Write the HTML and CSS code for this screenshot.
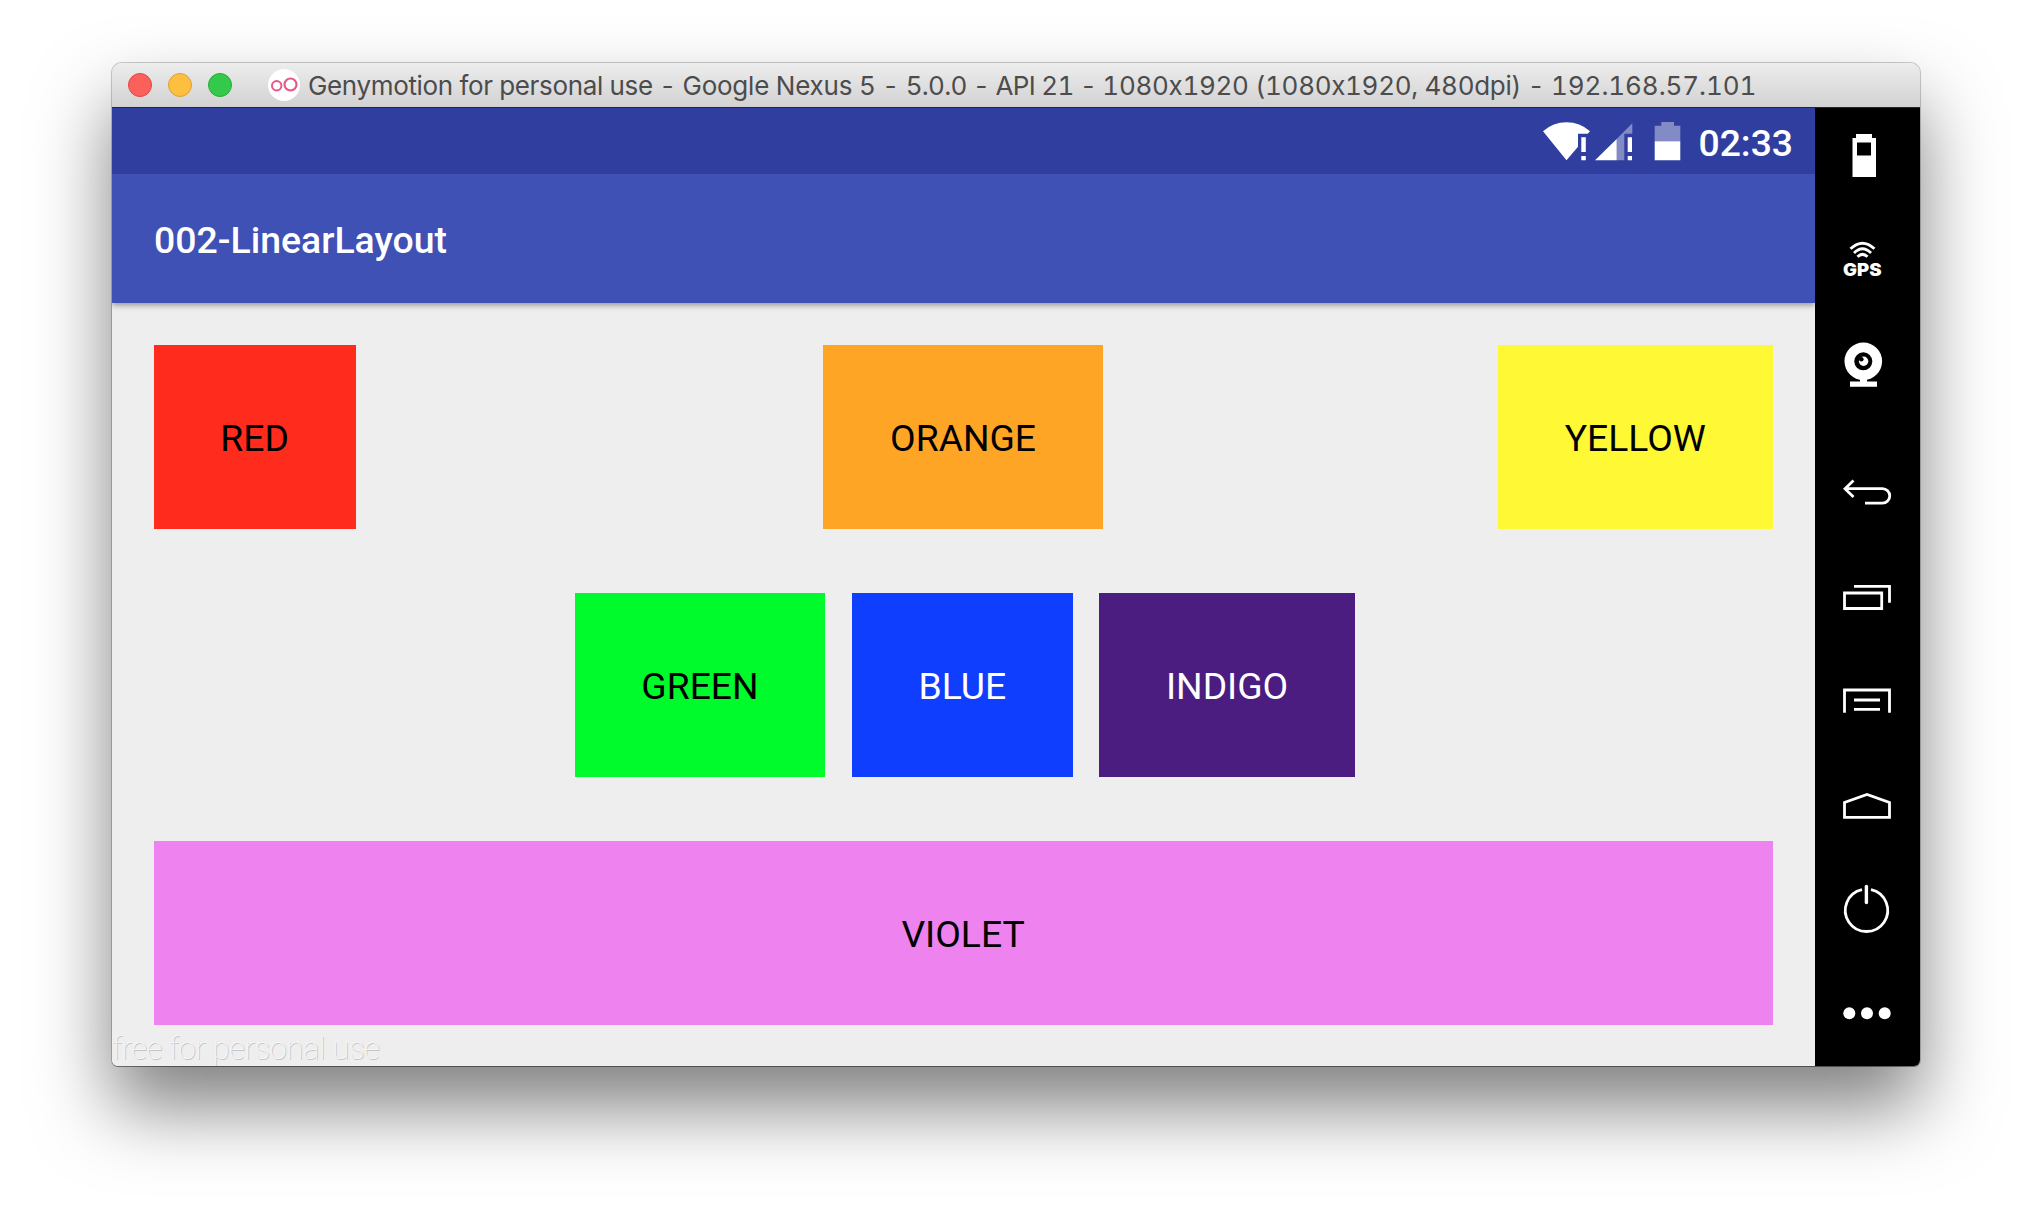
FILE: index.html
```html
<!DOCTYPE html>
<html lang="en">
<head>
<meta charset="utf-8">
<title>Genymotion</title>
<link rel="stylesheet" href="styles.css">
</head>
<body>
<div class="window">
  <header class="titlebar">
    <div class="lights">
      <span class="light close"></span>
      <span class="light minimize"></span>
      <span class="light zoom"></span>
    </div>
    <svg class="logo" width="32" height="32" viewBox="0 0 32 32">
      <circle cx="16" cy="16" r="16" fill="#fff"/>
      <circle cx="8.700" cy="16.700" r="4.700" fill="none" stroke="#e8578a" stroke-width="2"/>
      <circle cx="22.500" cy="15.500" r="6" fill="none" stroke="#e8578a" stroke-width="2.200"/>
    </svg>
    <span class="caption"><span class="product">Genymotion for personal use - </span><span class="device">Google Nexus 5 - </span><span class="version">5.0.0 - API 21 - </span><span class="resolution">1080x1920 (1080x1920, 480dpi) - </span><span class="address">192.168.57.101</span></span>
  </header>
  <div class="body">
    <main class="screen">
      <div class="statusbar">
        <svg width="140" height="40" viewBox="0 0 140 40">
          <path d="M0 9.300Q10 .3 23.500.3T47 9.300L44.700 11.700H35V24.700L23.500 38.300Z" fill="#fff"/>
          <path d="M38.300 15.300h4.500v14.700h-4.500zM38.300 34h4.500v4.300h-4.500zM84.700 15.300h4.300v14.700h-4.300zM84.700 34h4.300v4.300h-4.300zM52 38.300L73.700 17v21.300zM111.700 19.300h25.600v19H111.700z" fill="#fff"/>
          <path d="M73.700 17L89.300 1.300V11.700H81.300V38.300H73.700zM111.700 3.700H118.300V0H131V3.700H137.300V19.300H111.700z" fill="#fff" fill-opacity=".4"/>
        </svg>
        <span class="clock">02:33</span>
      </div>
      <div class="appbar">002-LinearLayout</div>
      <div class="content">
        <div class="row spread">
          <div class="box red">RED</div>
          <div class="box orange">ORANGE</div>
          <div class="box yellow">YELLOW</div>
        </div>
        <div class="row centered">
          <div class="box green">GREEN</div>
          <div class="box blue">BLUE</div>
          <div class="box indigo">INDIGO</div>
        </div>
        <div class="row">
          <div class="box violet">VIOLET</div>
        </div>
        <span class="watermark">free for personal use</span>
      </div>
    </main>
    <aside class="toolbar">
      <svg class="tool" viewBox="0 0 105 104">
        <path fill="#fff" fill-rule="evenodd" d="M41 26h16v4h4v39H37.500V30H41zM42 34.500v13h14v-13z"/>
      </svg>
      <svg class="tool" viewBox="0 0 105 104">
        <g fill="none" stroke="#fff" stroke-width="2.900">
          <path d="M35.500 36.800Q47.500 25.500 59.500 36.800M39 41Q47.500 32.500 56 41M42.500 44.800Q47.500 40 52.500 44.800"/>
        </g>
        <text class="gps" x="28" y="64" textLength="38.500" lengthAdjust="spacingAndGlyphs">GPS</text>
      </svg>
      <svg class="tool" viewBox="0 0 105 104">
        <circle cx="48.300" cy="45.300" r="18.800" fill="#fff"/>
        <circle cx="48.300" cy="45.300" r="9" fill="#000"/>
        <circle cx="48.600" cy="45.300" r="4.700" fill="#fff"/>
        <circle cx="46.300" cy="43.200" r="2.300" fill="#000"/>
        <path d="M45 62h7v3.500h10v5.200H35v-5.200h10z" fill="#fff"/>
      </svg>
      <svg class="tool back" viewBox="0 0 105 104">
        <path class="line" d="M38.500 38.500L30 46.700L38.500 55M30 46.700H67.500A7.200 7.200 0 0 1 67.500 61.200H50"/>
      </svg>
      <svg class="tool" viewBox="0 0 105 104">
        <path class="line" d="M29.500 47h37.200v15.500h-37.200zM39 40.300h35.500v16.400"/>
      </svg>
      <svg class="tool" viewBox="0 0 105 104">
        <path class="line" d="M29.500 62.700V40h45V62.700M39 50h26M39 59.300h26"/>
      </svg>
      <svg class="tool" viewBox="0 0 105 104">
        <path class="line" d="M29.500 63.300V48.500L52 40.500L74.500 48.500V63.300z"/>
      </svg>
      <svg class="tool" viewBox="0 0 105 104">
        <path class="line" d="M56 31.600A21.200 21.200 0 1 1 47 31.600"/>
        <path class="line thick" d="M51.400 28.500v16"/>
      </svg>
      <svg class="tool" viewBox="0 0 105 104">
        <g fill="#fff"><circle cx="34.300" cy="51.300" r="6"/><circle cx="52" cy="51.300" r="6"/><circle cx="69.700" cy="51.300" r="6"/></g>
      </svg>
    </aside>
  </div>
</div>
</body>
</html>
```
FILE: styles.css
```css
* { box-sizing: border-box; }

body {
  margin: 0;
  width: 2032px;
  height: 1226px;
  padding: 63px 112px 0;
  background: #fff;
  overflow: hidden;
  font-family: Roboto, sans-serif;
}

.window {
  width: 1808px;
  height: 1003px;
  border-radius: 10px 10px 6px 6px;
  box-shadow: 0 0 0 1px rgba(0, 0, 0, .2), 0 1px 0 0 rgba(0, 0, 0, .3), 0 41px 76px rgba(0, 0, 0, .5);
}

.titlebar {
  display: flex;
  align-items: center;
  height: 45px;
  padding-left: 16px;
  border-radius: 10px 10px 0 0;
  border-bottom: 1px solid #25272e;
  background: linear-gradient(#ededed, #d2d2d2);
}

.lights { display: flex; gap: 16px; }

.light {
  width: 24px;
  height: 24px;
  border-radius: 50%;
}

.close { background: #fc605b; border: 1px solid #e2463f; }
.minimize { background: #fdbf40; border: 1px solid #dfa033; }
.zoom { background: #34c94a; border: 1px solid #27aa35; }

.logo { margin-left: 36px; }

.caption {
  margin: 1px 0 0 8px;
  font: 26px Inter, sans-serif;
  font-feature-settings: "tnum" 1, "calt" 0;
  color: #4c4c4c;
  white-space: nowrap;
}

.product { letter-spacing: -.35px; }
.device { letter-spacing: -.23px; }
.version { letter-spacing: -.69px; }
.resolution { letter-spacing: -.32px; }
.address { letter-spacing: -.08px; }

.body {
  display: flex;
  height: 958px;
}

.screen {
  width: 1703px;
  display: flex;
  flex-direction: column;
  background: #eee;
  border-radius: 0 0 0 6px;
}

.statusbar {
  display: flex;
  align-items: center;
  justify-content: flex-end;
  gap: 15.500px;
  height: 66px;
  padding: 1px 22px 0 0;
  background: #303f9f;
}

.clock {
  padding-top: 2px;
  font-size: 37.250px;
  font-weight: 500;
  color: #fff;
}

.appbar {
  height: 129px;
  padding-left: 42px;
  line-height: 132px;
  background: #3f51b5;
  box-shadow: 0 2px 6px rgba(0, 0, 0, .4);
  clip-path: inset(0 0 -12px 0);
  font-size: 37.400px;
  font-weight: 500;
  color: #fff;
}

.content {
  position: relative;
  flex: 1;
  display: flex;
  flex-direction: column;
  gap: 64px;
  padding: 42px 42.500px 0 41.600px;
}

.row { display: flex; height: 184px; }
.spread { display: grid; grid-template-columns: 1fr auto 1fr; }
.centered { justify-content: center; gap: 26.500px; padding-left: 3.500px; }

.box {
  display: flex;
  align-items: center;
  justify-content: center;
  padding: 2px 66.700px 0;
  font-size: 37.250px;
  color: #000;
}

.red { background: #ff2b1c; justify-self: start; }
.orange { background: #ffa526; }
.yellow { background: #fff935; justify-self: end; }
.green { background: #00fb2d; }
.blue { background: #0f3eff; color: #fff; }
.indigo { background: #4b1d80; color: #fff; }
.violet { flex: 1; background: #ee82ee; }

.watermark {
  position: absolute;
  left: 0;
  bottom: -1px;
  font-size: 31px;
  font-weight: 100;
  line-height: 36px;
  letter-spacing: -.3px;
  color: #f6f6f6;
  text-shadow: 1px 1px 0 #c4c4c4;
}

.toolbar {
  width: 105px;
  display: flex;
  flex-direction: column;
  background: #000;
  border-radius: 0 0 6px 0;
}

.tool { flex: none; width: 105px; height: 104px; }
.back { margin-top: 22px; }

.gps {
  font: 900 17.500px Inter, sans-serif;
  fill: #fff;
}

.line { fill: none; stroke: #fff; stroke-width: 2.800px; }
.thick { stroke-width: 3.400px; stroke-linecap: round; }
```
